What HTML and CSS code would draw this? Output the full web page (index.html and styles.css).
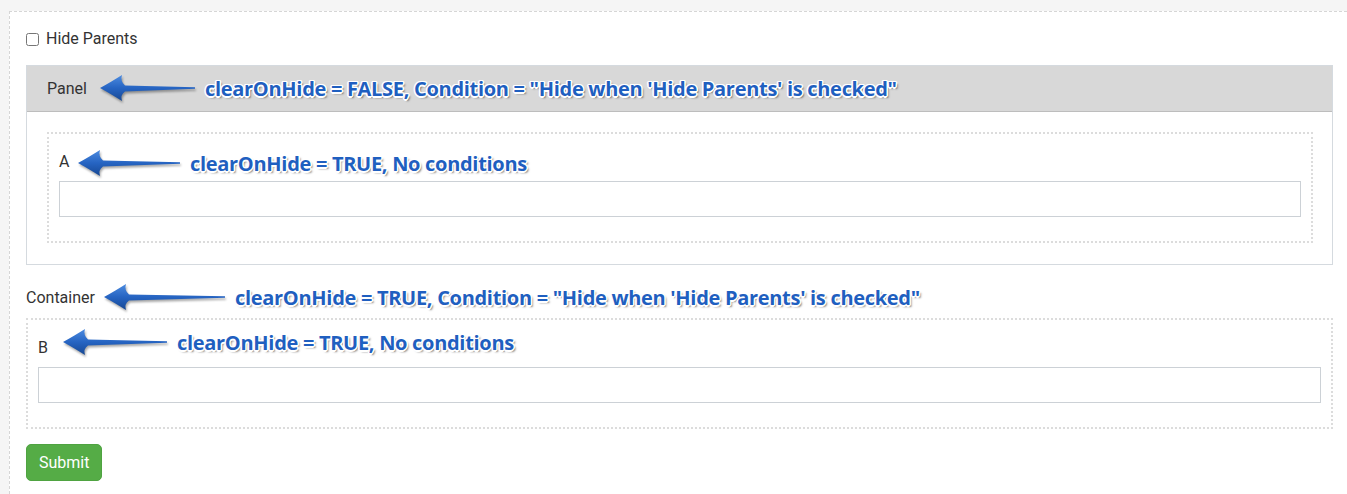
FILE: index.html
```html
<!DOCTYPE html>
<html>
<head>
	<meta charset="utf8">
	<meta name="viewport" content="width=device-width">
	<title>clearOnHide test form</title>
	<link rel="stylesheet" href="styles.css">
</head>
<body>
	<div class="page">
		<form class="builder" onsubmit="return false">
			<label class="checkrow"><input type="checkbox"> Hide Parents</label>

			<div class="panel">
				<div class="panel-heading">Panel</div>
				<div class="panel-body">
					<div class="component">
						<label class="field-label">A</label>
						<input type="text" class="field-input">
					</div>
				</div>
			</div>

			<div class="container-label">Container</div>
			<div class="component">
				<label class="field-label">B</label>
				<input type="text" class="field-input">
			</div>

			<button class="submit">Submit</button>
		</form>

		<!-- annotations drawn over the form -->
		<div class="note note-panel">
			<svg class="arrow" width="95" height="26" viewBox="0 0 95 26">
				<defs>
					<linearGradient id="blue" x1="0" y1="0" x2="0" y2="1">
						<stop offset="0" stop-color="#4c8be0"/>
						<stop offset="0.5" stop-color="#2664c2"/>
						<stop offset="1" stop-color="#174894"/>
					</linearGradient>
				</defs>
				<path d="M0,13 C8,9 15,4 22,0 Q20,6 25,10.5 L95,12.3 L95,13.7 L25,16.5 Q20,20 22,26 C15,22 8,17 0,13 Z" fill="url(#blue)"/>
			</svg>
			<span class="note-text">clearOnHide = FALSE, Condition = "Hide when 'Hide Parents' is checked"</span>
		</div>

		<div class="note note-a">
			<svg class="arrow" width="102" height="26" viewBox="0 0 102 26">
				<path d="M0,13 C8,9 15,4 22,0 Q20,6 25,10.5 L102,12.3 L102,13.7 L25,16.5 Q20,20 22,26 C15,22 8,17 0,13 Z" fill="url(#blue)"/>
			</svg>
			<span class="note-text">clearOnHide = TRUE, No conditions</span>
		</div>

		<div class="note note-container">
			<svg class="arrow" width="121" height="26" viewBox="0 0 121 26">
				<path d="M0,13 C8,9 15,4 22,0 Q20,6 25,10.5 L121,12.3 L121,13.7 L25,16.5 Q20,20 22,26 C15,22 8,17 0,13 Z" fill="url(#blue)"/>
			</svg>
			<span class="note-text">clearOnHide = TRUE, Condition = "Hide when 'Hide Parents' is checked"</span>
		</div>

		<div class="note note-b">
			<svg class="arrow" width="104" height="26" viewBox="0 0 104 26">
				<path d="M0,13 C8,9 15,4 22,0 Q20,6 25,10.5 L104,12.3 L104,13.7 L25,16.5 Q20,20 22,26 C15,22 8,17 0,13 Z" fill="url(#blue)"/>
			</svg>
			<span class="note-text">clearOnHide = TRUE, No conditions</span>
		</div>
	</div>
</body>
</html>
```

FILE: styles.css
```css
html, body {
	margin: 0;
	padding: 0;
	background: #f5f5f5;
	font-family: Roboto, "Liberation Sans", sans-serif;
	font-size: 16px;
	color: #333;
}

.page {
	position: relative;
	height: 494px;
	overflow: hidden;
}

.builder {
	margin: 11px 0 0 9px;
	padding: 17px 14px 40px 16px;
	background: #fff;
	border-top: 1px dashed #d6d6d6;
	border-left: 1px dashed #d6d6d6;
	min-height: 500px;
}

.checkrow {
	display: flex;
	align-items: center;
	gap: 7px;
	line-height: 20px;
}
.checkrow input {
	margin: 0;
	width: 13px;
	height: 13px;
}

/* panel */
.panel {
	margin-top: 16px;
	border: 1px solid #d5dadf;
}
.panel-heading {
	background: #d8d8d8;
	border-bottom: 1px solid #bdbdbd;
	padding: 12px 20px;
	line-height: 21px;
}
.panel-body {
	padding: 20px 19px 21px 20px;
}

/* components */
.component {
	border: 2px dotted #dcdcdc;
	padding: 18px 10px 24px 10px;
}
.field-label {
	display: block;
	line-height: 20px;
	margin-bottom: 9px;
}
.field-input {
	display: block;
	box-sizing: border-box;
	width: 100%;
	height: 36px;
	margin: 0;
	border: 1px solid #ccd1d6;
	border-radius: 0;
	background: #fff;
}

.container-label {
	margin-top: 23px;
	margin-bottom: 10px;
	line-height: 20px;
}

.submit {
	margin-top: 15px;
	background: #55ac46;
	color: #fff;
	border: 1px solid #4fa341;
	border-radius: 5px;
	font-family: Roboto, "Liberation Sans", sans-serif;
	font-size: 16px;
	line-height: 23px;
	padding: 6px 12px;
}

/* annotations */
.note {
	position: absolute;
	display: flex;
	align-items: center;
	gap: 10px;
	height: 26px;
}
.note-panel { left: 100px; top: 75px; }
.note-a { left: 78px; top: 150px; }
.note-container { left: 104px; top: 284px; }
.note-b { left: 63px; top: 329px; }

.arrow {
	flex: 0 0 auto;
	filter: drop-shadow(1px 2px 1px rgba(0, 0, 0, 0.35));
}
.note-text {
	font-family: "Open Sans", "DejaVu Sans", sans-serif;
	font-weight: 700;
	font-size: 20px;
	letter-spacing: -0.3px;
	white-space: nowrap;
	color: #1f5fc0;
	text-shadow:
		1.5px 0 0 #fff, -1.5px 0 0 #fff, 0 1.5px 0 #fff, 0 -1.5px 0 #fff,
		1px 1px 0 #fff, -1px -1px 0 #fff, 1px -1px 0 #fff, -1px 1px 0 #fff,
		2px 2px 2px rgba(0, 0, 0, 0.5);
}
```
